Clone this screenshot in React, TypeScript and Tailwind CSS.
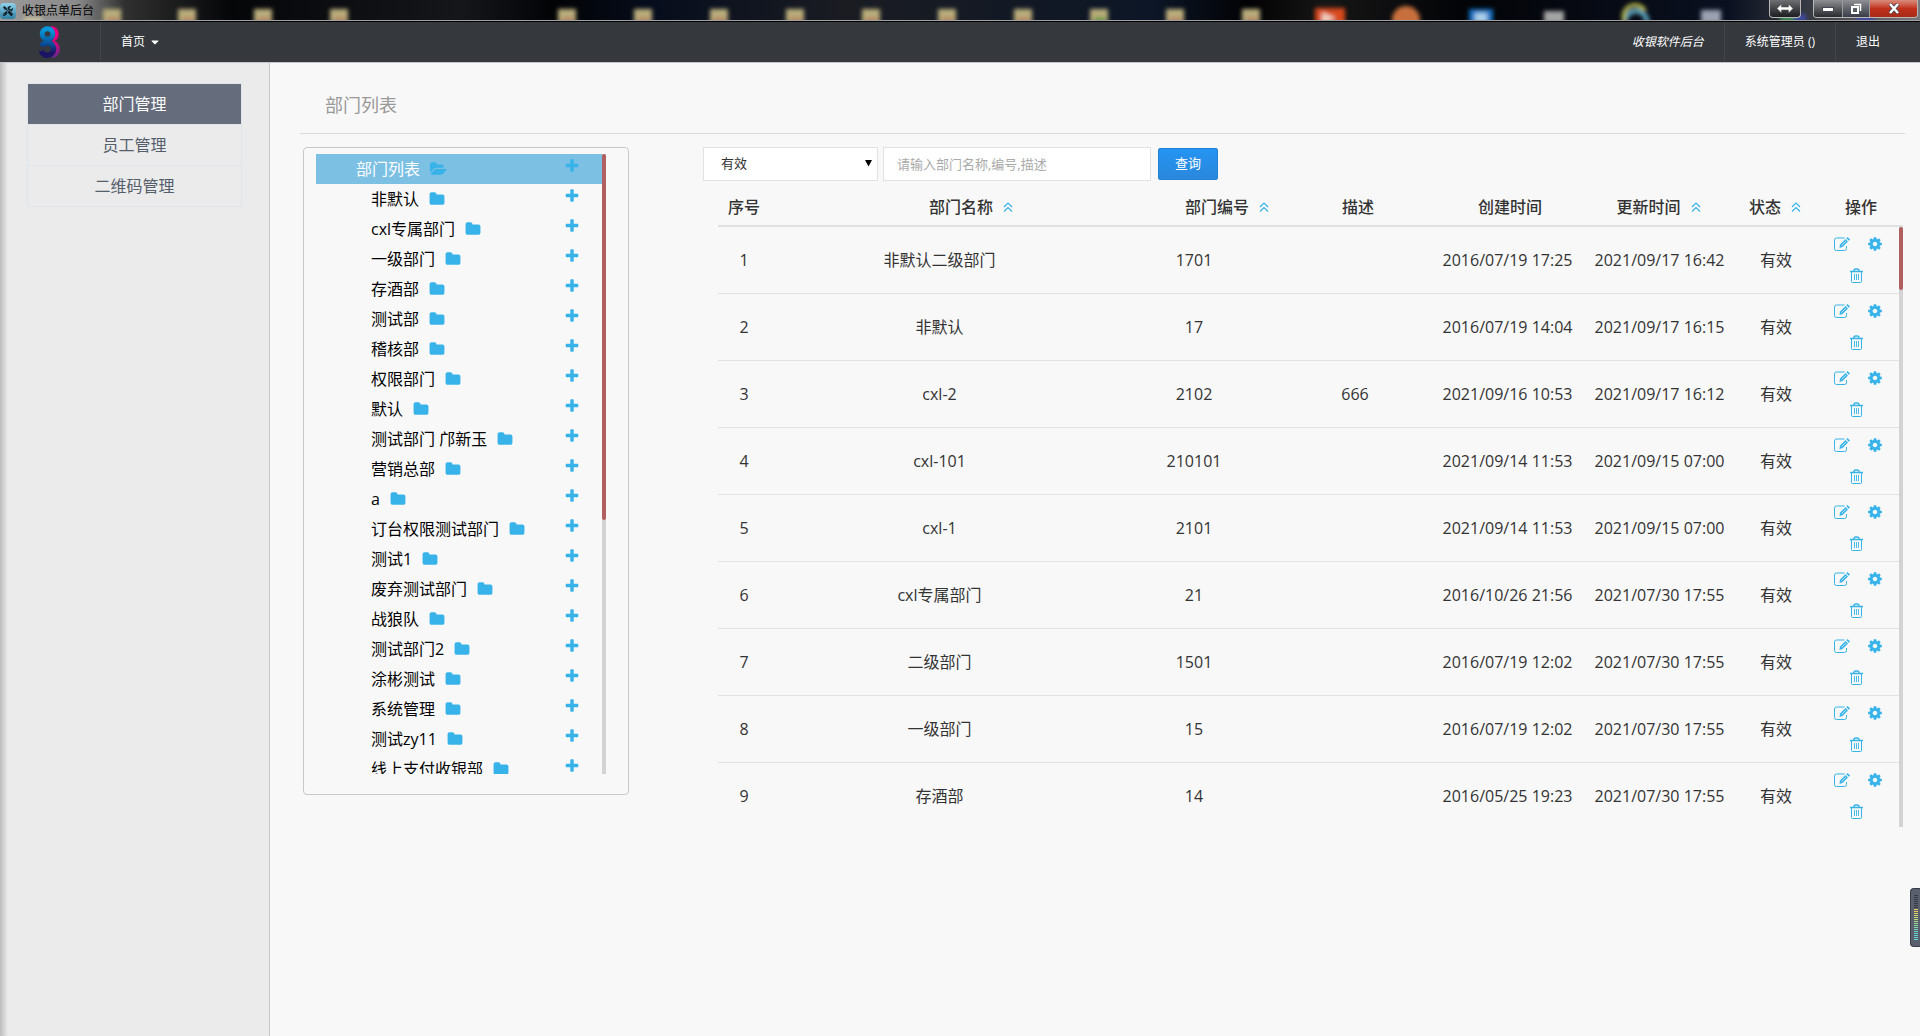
import React, { useState } from 'react';
import { FaCaretDown, FaTools } from 'react-icons/fa';

const menuItems = ['部门管理', '员工管理', '二维码管理'];

const departments = [
  '非默认',
  'cxl专属部门',
  '一级部门',
  '存酒部',
  '测试部',
  '稽核部',
  '权限部门',
  '默认',
  '测试部门 邝新玉',
  '营销总部',
  'a',
  '订台权限测试部门',
  '测试1',
  '废弃测试部门',
  '战狼队',
  '测试部门2',
  '涂彬测试',
  '系统管理',
  '测试zy11',
  '线上支付收银部',
];

const rows = [
  { name: '非默认二级部门', code: '1701', desc: '', created: '2016/07/19 17:25', updated: '2021/09/17 16:42' },
  { name: '非默认', code: '17', desc: '', created: '2016/07/19 14:04', updated: '2021/09/17 16:15' },
  { name: 'cxl-2', code: '2102', desc: '666', created: '2021/09/16 10:53', updated: '2021/09/17 16:12' },
  { name: 'cxl-101', code: '210101', desc: '', created: '2021/09/14 11:53', updated: '2021/09/15 07:00' },
  { name: 'cxl-1', code: '2101', desc: '', created: '2021/09/14 11:53', updated: '2021/09/15 07:00' },
  { name: 'cxl专属部门', code: '21', desc: '', created: '2016/10/26 21:56', updated: '2021/07/30 17:55' },
  { name: '二级部门', code: '1501', desc: '', created: '2016/07/19 12:02', updated: '2021/07/30 17:55' },
  { name: '一级部门', code: '15', desc: '', created: '2016/07/19 12:02', updated: '2021/07/30 17:55' },
  { name: '存酒部', code: '14', desc: '', created: '2016/05/25 19:23', updated: '2021/07/30 17:55' },
];

const columns = [
  { title: '序号', sortable: false, width: 'w-[52px]' },
  { title: '部门名称', sortable: true, width: '' },
  { title: '部门编号', sortable: true, width: 'w-[110px]' },
  { title: '描述', sortable: false, width: 'w-[152px]' },
  { title: '创建时间', sortable: false, width: 'w-[152px]' },
  { title: '更新时间', sortable: true, width: 'w-[145px]' },
  { title: '状态', sortable: true, width: 'w-[88px]' },
  { title: '操作', sortable: false, width: 'w-[84px]' },
];

// desktop folders seen through the glass title bar
const folders = [112, 187, 263, 339, 567, 643, 719, 795, 871, 947, 1023, 1099, 1175, 1251];

const meterBars = [
  '#363a44', '#363a44', '#363a44', '#363a44', '#363a44', '#363a44', '#363a44',
  '#e8c95a', '#e8d060', '#e0d468', '#d4d670', '#c6d878', '#b8da80', '#a8da88',
  '#98da92', '#8ada9e', '#7edaac', '#74d8ba', '#6cd6c6', '#66d4d0', '#66d4d0', '#66d4d0', '#66d4d0',
];

function FolderIcon() {
  return (
    <svg width="16" height="16" viewBox="0 0 1792 1792" fill="currentColor">
      <path d="M1728 608v704q0 92-66 158t-158 66h-1216q-92 0-158-66t-66-158v-960q0-92 66-158t158-66h320q92 0 158 66t66 158v32h672q92 0 158 66t66 158z" />
    </svg>
  );
}

function FolderOpenIcon() {
  return (
    <svg width="17" height="16" viewBox="0 0 1920 1792" fill="currentColor">
      <path d="M1879 952q0 31-31 66l-336 396q-43 51-120.500 86.500t-143.500 35.500h-1088q-34 0-60.500-13t-26.500-43q0-31 31-66l336-396q43-51 120.500-86.500t143.500-35.500h1088q34 0 60.500 13t26.500 43zm-343-344v160h-832q-94 0-197 47.500t-164 119.500l-337 396-5 6q0-4-.5-12.500t-.5-12.500v-960q0-92 66-158t158-66h320q92 0 158 66t66 158v32h544q92 0 158 66t66 158z" />
    </svg>
  );
}

function PlusIcon() {
  return (
    <svg width="16" height="16" viewBox="0 0 1792 1792" fill="currentColor">
      <path d="M1600 736v192q0 40-28 68t-68 28h-416v416q0 40-28 68t-68 28h-192q-40 0-68-28t-28-68v-416h-416q-40 0-68-28t-28-68v-192q0-40 28-68t68-28h416v-416q0-40 28-68t68-28h192q40 0 68 28t28 68v416h416q40 0 68 28t28 68z" />
    </svg>
  );
}

function GearIcon() {
  return (
    <svg width="16" height="16" viewBox="0 0 1792 1792" fill="currentColor">
      <path d="M1152 896q0-106-75-181t-181-75-181 75-75 181 75 181 181 75 181-75 75-181zm512-109v222q0 12-8 23t-20 13l-185 28q-19 54-39 91 35 50 107 138 10 12 10 25t-9 23q-27 37-99 108t-94 71q-12 0-26-9l-138-108q-44 23-91 38-16 136-29 186-7 28-36 28h-222q-14 0-24.500-8.500t-11.500-21.500l-28-184q-49-16-90-37l-141 107q-10 9-25 9-14 0-25-11-126-114-165-168-7-10-7-23 0-12 8-23 15-21 51-66.500t54-70.500q-27-50-41-99l-183-27q-13-2-21-12.500t-8-23.500v-222q0-12 8-23t19-13l186-28q14-46 39-92-40-57-107-138-10-12-10-24 0-10 9-23 26-36 98.500-107.500t94.500-71.500q13 0 26 10l138 107q44-23 91-38 16-136 29-186 7-28 36-28h222q14 0 24.500 8.500t11.500 21.500l28 184q49 16 90 37l142-107q9-9 24-9 13 0 25 10 129 119 165 170 7 8 7 22 0 12-8 23-15 21-51 66.500t-54 70.500q26 50 41 98l183 28q13 2 21 12.500t8 23.500z" />
    </svg>
  );
}

function SortIcon() {
  return (
    <svg width="10" height="10" viewBox="0 0 10 10" fill="none" stroke="#37b3ea" strokeWidth="1.2">
      <path d="M1 5 5 1l4 4M1 9.5l4-4 4 4" />
    </svg>
  );
}

function EditIcon() {
  return (
    <svg width="16" height="16" viewBox="0 0 16 16" fill="none" stroke="#37b3ea">
      <path d="M10.500 2H2.500a2 2 0 0 0-2 2v8.500a2 2 0 0 0 2 2h8a2 2 0 0 0 2-2V10" />
      <path d="M5.500 12 6 8.500l5.500-5.500 2.500 2.500-5.500 5.500z" fill="#37b3ea" stroke="none" />
      <path d="m12.300 2.200 1.200-1.200 2.500 2.500-1.200 1.200z" fill="#37b3ea" stroke="none" />
      <path d="m7.500 9.500 4.500-4.500" stroke="#d9f0fb" strokeWidth="0.8" />
    </svg>
  );
}

function TrashIcon() {
  return (
    <svg width="13" height="15" viewBox="0 0 13 15" fill="none" stroke="#37b3ea">
      <path d="M0 3.500h13M3.500 3.500q.5-2.500 2-2.500h2q1.500 0 2 2.500" strokeWidth="1.300" />
      <path d="M1.500 3.500v10a1 1 0 0 0 1 1h8a1 1 0 0 0 1-1v-10" />
      <path d="M4.500 6v6M6.500 6v6M8.500 6v6" strokeWidth="0.9" />
    </svg>
  );
}

function Logo() {
  return (
    <svg width="22" height="33" viewBox="0 0 22 33" fill="none" strokeWidth="5">
      <defs>
        <linearGradient id="front" gradientUnits="userSpaceOnUse" x1="0" y1="0" x2="0" y2="33">
          <stop offset="0.1" stopColor="#0899dc" />
          <stop offset="0.55" stopColor="#0a4d96" />
          <stop offset="0.8" stopColor="#1b1464" />
        </linearGradient>
        <linearGradient id="back" gradientUnits="userSpaceOnUse" x1="0" y1="0" x2="0" y2="33">
          <stop offset="0.4" stopColor="#e6007e" />
          <stop offset="1" stopColor="#5b2d90" />
        </linearGradient>
      </defs>
      <g stroke="url(#back)">
        <path d="M12 2.500a5.500 5.500 0 0 1 2 10.500M13 16.500a6.800 6.800 0 0 1 0 13.300" />
      </g>
      <g stroke="url(#front)">
        <circle cx="8.500" cy="8" r="5.300" />
        <path d="M3 20.500Q4 16.800 8.500 16.800a6.200 6.200 0 1 1-6.200 8" strokeWidth="5.500" />
      </g>
    </svg>
  );
}

function TitleBar() {
  return (
    <header className="relative flex h-[22px] items-start overflow-hidden border-b border-black bg-[#05070c]">
      <svg className="absolute inset-0" width="1920" height="22">
        <defs>
          <filter id="soft" x="-50%" y="-50%" width="200%" height="200%">
            <feGaussianBlur stdDeviation="2" />
          </filter>
          <linearGradient id="wall">
            <stop offset="0" stopColor="#9a9a9a" />
            <stop offset="0.04" stopColor="#8a8a8a" />
            <stop offset="0.065" stopColor="#303030" />
            <stop offset="0.12" stopColor="#050608" />
            <stop offset="0.24" stopColor="#14161a" />
            <stop offset="0.29" stopColor="#020305" />
            <stop offset="0.34" stopColor="#060d1c" />
            <stop offset="0.44" stopColor="#1a1c22" />
            <stop offset="0.6" stopColor="#0c1626" />
            <stop offset="0.65" stopColor="#020204" />
            <stop offset="0.69" stopColor="#161616" />
            <stop offset="0.76" stopColor="#030407" />
            <stop offset="0.9" stopColor="#0a1020" />
            <stop offset="0.96" stopColor="#4a4c50" />
            <stop offset="1" stopColor="#77797c" />
          </linearGradient>
        </defs>
        <rect width="1920" height="22" fill="url(#wall)" />
        <g filter="url(#soft)">
          {folders.map((x) => (
            <g key={x}>
              <rect x={x - 9} y="9" width="18" height="14" fill="#b9ad7c" />
              <rect x={x - 5} y="17" width="12" height="5" fill={x === 1099 ? '#6f9a45' : '#b98a68'} />
            </g>
          ))}
          <rect x="24" y="18" width="18" height="5" fill="#d8cfa0" />
          <rect x="1315" y="8" width="30" height="16" fill="#d8481c" />
          <path d="M1322 12l14 6-14 6z" fill="#f0d0c0" />
          <circle cx="1406" cy="20" r="14" fill="#c8703c" />
          <rect x="1469" y="9" width="24" height="14" fill="#1272c4" />
          <rect x="1475" y="13" width="12" height="10" fill="#a8d0ea" />
          <rect x="1544" y="11" width="20" height="12" fill="#a4a4a4" />
          <circle cx="1636" cy="22" r="11" fill="none" stroke="#58a0b8" strokeWidth="5" />
          <path d="M1625 22a11 11 0 0 1 20-11" stroke="#b0b040" strokeWidth="4" fill="none" />
          <rect x="1701" y="10" width="20" height="13" fill="#9aa2b0" />
          <rect x="1780" y="14" width="14" height="8" fill="#3a8a50" />
          <rect x="1794" y="14" width="12" height="8" fill="#4048a0" />
          <rect x="1856" y="14" width="18" height="8" fill="#4048a0" />
        </g>
        <rect y="20" width="1920" height="1" fill="#a2a2a6" />
      </svg>
      <div className="relative flex flex-1 items-center gap-1.5 pt-[3px]">
        <span className="flex h-4 w-4 items-center justify-center rounded-sm bg-gradient-to-b from-[#8fd3ea] to-[#2d7fa3]">
          <FaTools size={10} className="text-[#10222c]" />
        </span>
        <span className="text-xs leading-4 text-black">收银点单后台</span>
      </div>
      <div className="relative mr-0.5 flex h-[18px] gap-3">
        <button aria-label="切换" className="flex w-8 items-center justify-center rounded-b border border-t-0 border-[#b8b8b8] bg-gradient-to-b from-[#6e7074] to-[#1c1e22]">
          <svg width="16" height="9" viewBox="0 0 16 9" fill="#fff" stroke="#444" strokeWidth="0.500">
            <path d="M0 4.500 4.500 0v3h7V0L16 4.500 11.500 9V6h-7v3z" />
          </svg>
        </button>
        <div className="flex overflow-hidden rounded-b border border-t-0 border-[#b8b8b8]">
          <button aria-label="最小化" className="flex w-[29px] items-center justify-center border-r border-[#9a9a9a] bg-gradient-to-b from-[#8e9094] to-[#2a2c30]">
            <svg width="12" height="6" viewBox="0 0 12 6"><rect x="0.500" y="1.500" width="11" height="4" fill="#fff" stroke="#445" /></svg>
          </button>
          <button aria-label="还原" className="flex w-[27px] items-center justify-center border-r border-[#9a9a9a] bg-gradient-to-b from-[#8e9094] to-[#3a3c48]">
            <svg width="12" height="12" viewBox="0 0 12 12" fill="none" stroke="#fff" strokeWidth="2">
              <path d="M4 1.500h6.500V8" strokeWidth="1.500" />
              <rect x="2" y="4" width="6" height="6" />
            </svg>
          </button>
          <button aria-label="关闭" className="flex w-[47px] items-center justify-center bg-gradient-to-b from-[#d98a7c] via-[#c0301a] to-[#a82a18]">
            <svg width="12" height="11" viewBox="0 0 12 11" fill="none">
              <path d="m2 1 8 9M10 1 2 10" stroke="#445" strokeWidth="4" />
              <path d="m2 1 8 9M10 1 2 10" stroke="#fff" strokeWidth="2.500" />
            </svg>
          </button>
        </div>
      </div>
    </header>
  );
}

function NavBar() {
  return (
    <nav className="flex h-[41px] border-b border-[#c4c4c8] bg-[#35383d] text-xs text-white">
      <a href="#home" aria-label="首页" className="flex w-[101px] items-start justify-center border-r border-[#42454a] pt-1">
        <Logo />
      </a>
      <button className="flex items-center gap-1 px-5">
        首页
        <FaCaretDown size={12} />
      </button>
      <div className="ml-auto mr-5 flex">
        <span className="flex items-center border-r border-[#42454a] px-5 italic">收银软件后台</span>
        <a href="#user" className="flex items-center border-r border-[#42454a] px-5">系统管理员 ()</a>
        <a href="#logout" className="flex items-center px-5">退出</a>
      </div>
    </nav>
  );
}

function DepartmentTree() {
  return (
    <section className="h-[648px] w-[326px] shrink-0 rounded border border-[#c8c8c8] pt-1.5 pr-[22px] pl-3">
      <div className="flex h-[620px] overflow-hidden">
        <ul className="min-w-0 flex-1 text-base leading-[30px] text-black">
          <li className="flex h-[30px] items-center bg-[#7cc0e4] pr-[22px] pl-10 text-white">
            部门列表
            <span className="ml-2.5 text-[#37b3ea]"><FolderOpenIcon /></span>
            <button aria-label="添加部门" className="mb-1.5 ml-auto text-[#37b3ea]">
              <PlusIcon />
            </button>
          </li>
          {departments.map((name) => (
            <li key={name} className="flex h-[30px] items-center pr-[22px] pl-[55px]">
              {name}
              <span className="ml-2.5 text-[#37b3ea]"><FolderIcon /></span>
              <button aria-label={`添加到${name}`} className="mb-1.5 ml-auto text-[#37b3ea]">
                <PlusIcon />
              </button>
            </li>
          ))}
        </ul>
        <div className="w-1 bg-[#d3d3d3]">
          <div className="h-[366px] rounded-sm bg-[#b06060]" />
        </div>
      </div>
    </section>
  );
}

function Filters() {
  const [status, setStatus] = useState('valid');
  const [keyword, setKeyword] = useState('');

  return (
    <form className="flex items-center text-[13px] text-[#333]" onSubmit={(e) => e.preventDefault()}>
      <div className="relative mr-[5px]">
        <select
          aria-label="状态"
          value={status}
          onChange={(e) => setStatus(e.target.value)}
          className="block h-[34px] w-[175px] appearance-none border border-[#e2e2e4] bg-white px-[17px]"
        >
          <option value="valid">有效</option>
          <option value="invalid">无效</option>
        </select>
        <svg className="pointer-events-none absolute top-3 right-1.5" width="7" height="8" viewBox="0 0 7 8">
          <path d="M0 1h7L3.500 7.500z" fill="#000" />
        </svg>
      </div>
      <input
        type="text"
        aria-label="关键字"
        placeholder="请输入部门名称,编号,描述"
        value={keyword}
        onChange={(e) => setKeyword(e.target.value)}
        className="mr-[7px] h-[34px] w-[268px] border border-[#e2e2e4] bg-white px-[13px] placeholder:text-[#aaa]"
      />
      <button type="submit" className="h-8 w-[60px] rounded-xs border border-[#2283d4] bg-gradient-to-b from-[#2494f2] to-[#2a88dc] text-white">
        查询
      </button>
    </form>
  );
}

function DepartmentTable() {
  return (
    <div className="ml-[15px] text-base text-[#333]">
      <table className="w-full table-fixed border-b-2 border-[#e0e0e0]">
        <thead>
          <tr className="h-[45px]">
            {columns.map((col) => (
              <th key={col.title} className={`${col.width} p-0 pt-2 text-center font-medium whitespace-nowrap`}>
                {col.sortable ? (
                  <button className="inline-flex items-center gap-2.5">
                    {col.title}
                    <SortIcon />
                  </button>
                ) : (
                  col.title
                )}
              </th>
            ))}
          </tr>
        </thead>
      </table>
      <div className="flex h-[600px] overflow-hidden">
        <div className="min-w-0 flex-1">
          <table className="w-full table-fixed">
            <colgroup>
              <col className="w-[52px]" />
              <col />
              <col className="w-[170px]" />
              <col className="w-[152px]" />
              <col className="w-[153px]" />
              <col className="w-[151px]" />
              <col className="w-[82px]" />
              <col className="w-[82px]" />
            </colgroup>
            <tbody>
              {rows.map((row, index) => (
                <tr key={row.code} className="h-[67px] border-b border-[#e2e2e2] text-center first:h-[66px]">
                  <td>{index + 1}</td>
                  <td>{row.name}</td>
                  <td>{row.code}</td>
                  <td>{row.desc}</td>
                  <td>{row.created}</td>
                  <td>{row.updated}</td>
                  <td>有效</td>
                  <td className="text-[#37b3ea]">
                    <div className="flex h-8 items-center justify-center gap-[17px]">
                      <button aria-label="编辑"><EditIcon /></button>
                      <button aria-label="设置"><GearIcon /></button>
                    </div>
                    <div className="flex h-8 items-center justify-center pr-1">
                      <button aria-label="删除"><TrashIcon /></button>
                    </div>
                  </td>
                </tr>
              ))}
            </tbody>
          </table>
        </div>
        <div className="w-1 bg-[#d3d3d3]">
          <div className="h-[63px] rounded-sm bg-[#b06060]" />
        </div>
      </div>
    </div>
  );
}

function LevelMeter() {
  return (
    <div className="fixed right-0 bottom-[89px] flex flex-col gap-px rounded-l border border-r-0 border-[#3a3d47] bg-[#5a5f6e] py-[6px] pr-0.5 pl-[3px]">
      {meterBars.map((color, i) => (
        <span key={i} className="h-px w-1" style={{ backgroundColor: color }} />
      ))}
    </div>
  );
}

export default function App() {
  return (
    <div className="flex min-h-screen flex-col bg-[#f8f8f8] font-['Open_Sans','Noto_Sans_CJK_SC',sans-serif]">
      <TitleBar />
      <NavBar />
      <div className="flex flex-1">
        <aside className="w-[270px] shrink-0 border-r border-[#c8c8c8] bg-gradient-to-r from-[#bdbdbd] via-[#ebebeb] via-[8px] to-[#ebebeb] pt-5 pr-[27px] pl-[27px]">
          <ul className="border border-[#e0e5ea] text-base">
            {menuItems.map((item, i) => (
              <li key={item} className={i > 0 ? 'border-t border-[#e0e5ea]' : ''}>
                <a
                  href={`#menu-${i}`}
                  className={`flex h-10 items-center justify-center ${
                    i === 0 ? 'bg-[#656d7c] text-white' : 'text-[#555e6c]'
                  }`}
                >
                  {item}
                </a>
              </li>
            ))}
          </ul>
        </aside>
        <main className="min-w-0 flex-1 pr-[15px] pl-[30px]">
          <h1 className="flex h-[71px] items-center border-b border-[#dadada] pt-3.5 pl-[25px] text-lg text-[#999]">
            部门列表
          </h1>
          <div className="flex gap-[74px] pt-[13px] pr-0.5 pl-[3px]">
            <DepartmentTree />
            <div className="min-w-0 flex-1">
              <Filters />
              <DepartmentTable />
            </div>
          </div>
        </main>
      </div>
      <LevelMeter />
    </div>
  );
}
